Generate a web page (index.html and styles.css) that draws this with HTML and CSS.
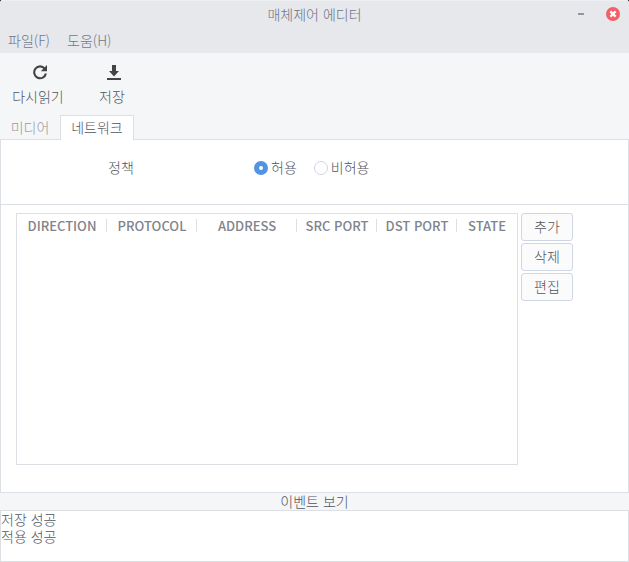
FILE: index.html
```html
<!DOCTYPE html>
<html lang="ko">
<head>
<meta charset="utf-8">
<title>매체제어 에디터</title>
<link rel="stylesheet" href="styles.css">
</head>
<body>
<div class="window">
  <header class="titlebar">
    <h1 class="title">매체제어 에디터</h1>
    <div class="window-controls">
      <button class="control" type="button" aria-label="최소화">
        <svg width="14" height="14" viewBox="0 0 14 14"><path d="M4 6h6v2H4z" fill="#8f95a1"/></svg>
      </button>
      <button class="control" type="button" aria-label="닫기">
        <svg width="14" height="14" viewBox="0 0 14 14"><circle cx="7" cy="7" r="7" fill="#f46067"/><path d="M4.4 4.4l5.2 5.2M9.6 4.4L4.4 9.6" stroke="#fff" stroke-width="2.2"/></svg>
      </button>
    </div>
  </header>
  <nav class="menubar">
    <button class="menu" type="button">파일(F)</button>
    <button class="menu" type="button">도움(H)</button>
  </nav>
  <div class="toolbar">
    <button class="tool" type="button">
      <svg width="16" height="16" viewBox="0 0 16 16"><path d="M12.7 4.6A5.9 5.9 0 1 0 13.9 9.5" fill="none" stroke="#444" stroke-width="2.1"/><path d="M15 1v6.2H8.8z" fill="#444"/></svg>
      <span>다시읽기</span>
    </button>
    <button class="tool" type="button">
      <svg width="16" height="16" viewBox="0 0 16 16"><path d="M6 1h4v6h3l-5 5.4L3 7h3zM1 14h14v2H1z" fill="#444"/></svg>
      <span>저장</span>
    </button>
  </div>
  <div class="tabs" role="tablist">
    <button class="tab" type="button" role="tab" aria-selected="false">미디어</button>
    <button class="tab tab-active" type="button" role="tab" aria-selected="true">네트워크</button>
  </div>
  <main class="panel">
    <div class="policy" role="radiogroup" aria-labelledby="policy-label">
      <span class="policy-label" id="policy-label">정책</span>
      <label class="option"><input type="radio" name="policy" checked><span class="option-text">허용</span></label>
      <label class="option"><input type="radio" name="policy"><span class="option-text">비허용</span></label>
    </div>
    <div class="rules">
      <div class="rules-frame">
        <table class="rules-table">
          <colgroup><col class="wide"><col class="wide"><col class="widest"><col class="normal"><col class="normal"><col></colgroup>
          <thead>
            <tr><th>DIRECTION</th><th>PROTOCOL</th><th>ADDRESS</th><th>SRC PORT</th><th>DST PORT</th><th>STATE</th></tr>
          </thead>
        </table>
      </div>
      <div class="actions">
        <button class="action" type="button">추가</button>
        <button class="action" type="button">삭제</button>
        <button class="action" type="button">편집</button>
      </div>
    </div>
  </main>
  <label class="log-title" for="log">이벤트 보기</label>
  <textarea class="log" id="log" readonly>저장 성공
적용 성공</textarea>
</div>
</body>
</html>
```
FILE: styles.css
```css
* {
  box-sizing: border-box;
}

body {
  margin: 0;
  background: #000;
  color: #50555f;
  font: 300 14px/18px "Noto Sans CJK KR", sans-serif;
}

button,
textarea {
  font: inherit;
  color: inherit;
}

button {
  padding: 0;
  border: 0;
  background: none;
}

.window {
  display: flex;
  flex-direction: column;
  min-height: 100vh;
  border-radius: 3px 3px 0 0;
  background: #f5f6f8;
  overflow: hidden;
}

.titlebar {
  display: grid;
  grid-template-columns: 1fr auto 1fr;
  align-items: center;
  height: 28px;
  padding: 0 9px;
  border-top: 1px solid #eeeff2;
  background: #e7e8eb;
  color: #6c7488;
}

.title {
  grid-column: 2;
  margin: 0;
  padding-bottom: 2px;
  font: inherit;
}

.window-controls {
  display: flex;
  justify-content: flex-end;
  gap: 18px;
  padding-bottom: 1px;
}

.control {
  display: flex;
}

.menubar {
  display: flex;
  gap: 17px;
  height: 25px;
  padding: 0 8px 2px;
  background: #e7e8eb;
  color: #70788e;
}

.toolbar {
  display: flex;
  gap: 22px;
  height: 62px;
  padding: 11px 12px 0;
}

.tool {
  display: flex;
  flex-direction: column;
  align-items: center;
  gap: 7px;
  min-width: 52px;
  height: 42px;
}

.tool svg {
  margin-left: 4px;
}

.tabs {
  display: flex;
  height: 25px;
  margin-bottom: -1px;
}

.tab {
  width: 60px;
  padding-bottom: 1px;
  color: #96999f;
}

.tab-active {
  position: relative;
  width: 74px;
  border: 1px solid #dcdfe3;
  border-bottom: 0;
  padding-bottom: 2px;
  background: #fff;
  color: #50555f;
}

.panel {
  display: flex;
  flex: 1;
  flex-direction: column;
  border: 1px solid #dcdfe3;
  background: #fff;
}

.policy {
  display: flex;
  align-items: center;
  gap: 17px;
  height: 65px;
  padding: 0 107px 9px;
  border-bottom: 1px solid #dcdfe3;
}

.policy-label {
  width: 129px;
  padding-bottom: 2px;
}

.option {
  display: flex;
  align-items: center;
  gap: 3px;
}

.option-text {
  padding-bottom: 2px;
}

.option input {
  appearance: none;
  width: 14px;
  height: 14px;
  margin: 0;
  border: 1px solid #cfd6e6;
  border-radius: 50%;
  background: #fff;
}

.option input:checked {
  border: 5px solid #5294e2;
}

.rules {
  display: flex;
  flex: 1;
  gap: 3px;
  padding: 8px 55px 27px 15px;
}

.rules-frame {
  flex: 1;
  border: 1px solid #dcdfe3;
}

.rules-table {
  width: 100%;
  border-collapse: collapse;
  table-layout: fixed;
}

.wide {
  width: 18%;
}

.widest {
  width: 20%;
}

.normal {
  width: 16%;
}

.rules-table th {
  height: 23px;
  padding: 0;
  background: linear-gradient(#dcdfe3, #dcdfe3) right center / 1px 13px no-repeat;
  color: #80848c;
  font-size: 13px;
  font-weight: 500;
  white-space: nowrap;
}

.rules-table th:last-child {
  background: none;
}

.actions {
  display: flex;
  flex-direction: column;
  gap: 2px;
  width: 52px;
}

.action {
  height: 28px;
  padding-bottom: 2px;
  border: 1px solid #cfd6e6;
  border-radius: 3px;
  background: #fbfbfc;
}

.log-title {
  height: 17px;
  line-height: 16px;
  text-align: center;
}

.log {
  display: block;
  width: 100%;
  height: 52px;
  padding: 0;
  border: 1px solid #dcdfe3;
  background: #fff;
  line-height: 17px;
  outline: 0;
  resize: none;
}
```
